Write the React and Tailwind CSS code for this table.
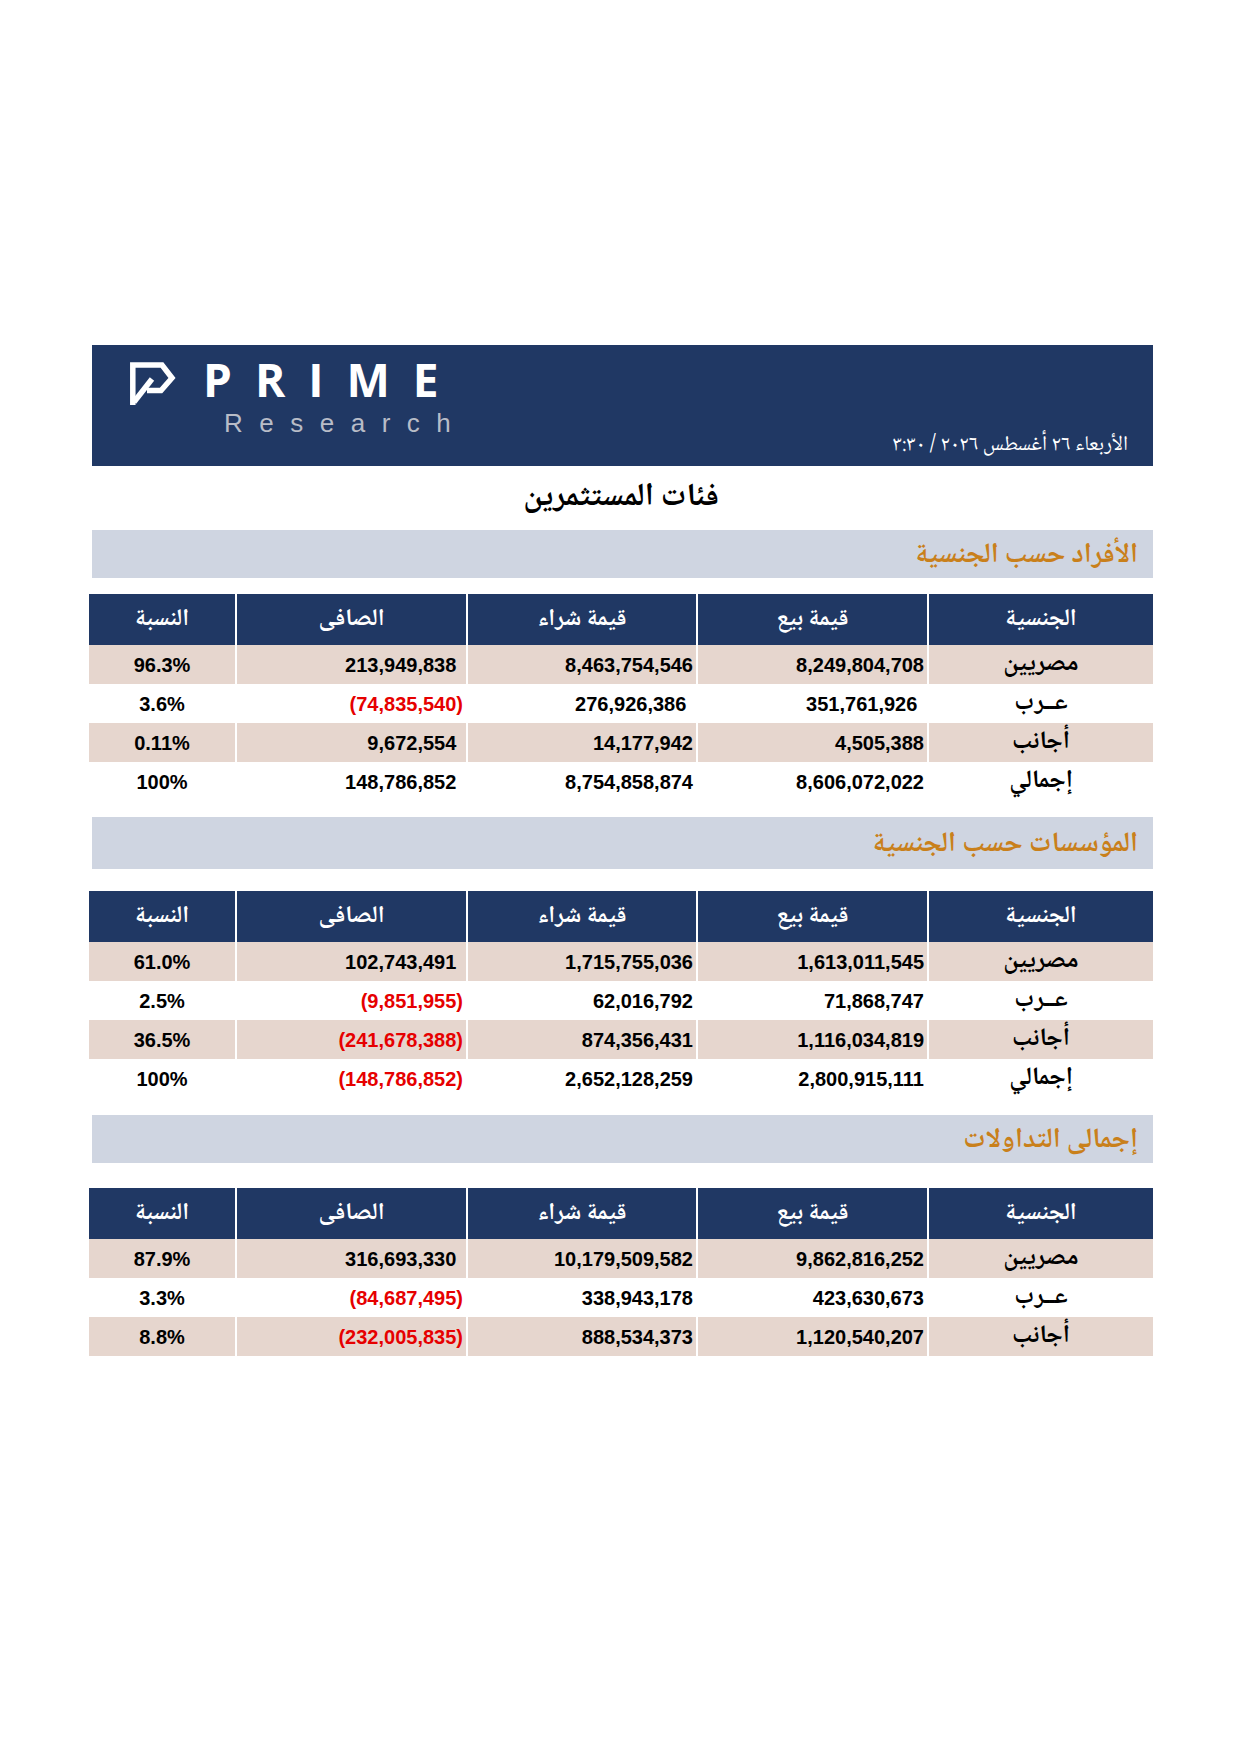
import React from "react";

const NAVY = "bg-[#203864]";

const t1 = [
  { name: "مصريين", sell: "8,249,804,708", buy: "8,463,754,546", net: "213,949,838", pct: "96.3%" },
  { name: "عــرب", sell: "351,761,926", buy: "276,926,386", net: "(74,835,540)", pct: "3.6%", pad: true },
  { name: "أجانب", sell: "4,505,388", buy: "14,177,942", net: "9,672,554", pct: "0.11%" },
  { name: "إجمالي", sell: "8,606,072,022", buy: "8,754,858,874", net: "148,786,852", pct: "100%" },
];
const t2 = [
  { name: "مصريين", sell: "1,613,011,545", buy: "1,715,755,036", net: "102,743,491", pct: "61.0%" },
  { name: "عــرب", sell: "71,868,747", buy: "62,016,792", net: "(9,851,955)", pct: "2.5%" },
  { name: "أجانب", sell: "1,116,034,819", buy: "874,356,431", net: "(241,678,388)", pct: "36.5%" },
  { name: "إجمالي", sell: "2,800,915,111", buy: "2,652,128,259", net: "(148,786,852)", pct: "100%" },
];
const t3 = [
  { name: "مصريين", sell: "9,862,816,252", buy: "10,179,509,582", net: "316,693,330", pct: "87.9%" },
  { name: "عــرب", sell: "423,630,673", buy: "338,943,178", net: "(84,687,495)", pct: "3.3%" },
  { name: "أجانب", sell: "1,120,540,207", buy: "888,534,373", net: "(232,005,835)", pct: "8.8%" },
];

const GRID = "grid grid-cols-[146px_229px_228px_229px_224px] gap-x-[2px]";
const AR = "font-['Noto_Naskh_Arabic','Noto_Sans_Arabic','DejaVu_Sans',sans-serif]";

function Num({ v, pad, bg }) {
  const neg = v.startsWith("(");
  return (
    <div className={`${bg} flex items-center justify-end pr-[3px]`}>
      <span className={neg ? "text-[#e60000]" : "text-black"}>{v}</span>
      {pad && !neg ? <span className="invisible">)</span> : null}
    </div>
  );
}

function Table({ rows }) {
  return (
    <div className="flex flex-col">
      <div className={`${GRID} h-[51px]`}>
        {["النسبة", "الصافى", "قيمة شراء", "قيمة بيع", "الجنسية"].map((h) => (
          <div key={h} dir="rtl" className={`${NAVY} ${AR} flex items-center justify-center text-white font-bold text-[24px] leading-none`}>
            <span>{h}</span>
          </div>
        ))}
      </div>
      {rows.map((r, i) => {
        const bg = i % 2 === 0 ? "bg-[#e6d6ce]" : "bg-white";
        return (
          <div key={i} className={`${GRID} h-[39px] text-[20px] font-bold`}>
            <div className={`${bg} flex items-center justify-center`}>{r.pct}</div>
            <Num v={r.net} pad={true} bg={bg} />
            <Num v={r.buy} pad={r.pad} bg={bg} />
            <Num v={r.sell} pad={r.pad} bg={bg} />
            <div dir="rtl" className={`${bg} ${AR} flex items-center justify-center text-[25px] leading-none`}>
              <span>{r.name}</span>
            </div>
          </div>
        );
      })}
    </div>
  );
}

function Bar({ title, h = "h-[48px]" }) {
  return (
    <div dir="rtl" className={`ml-[3px] ${h} bg-[#cfd5e1] ${AR} flex items-center pr-[15px] text-[#c9801b] font-bold text-[28px] leading-none`}>
      <span className="mt-[4px]">{title}</span>
    </div>
  );
}

function Logo() {
  return (
    <svg width="46" height="44" viewBox="0 0 46 44" className="block">
      <polyline points="2.8,43 2.8,3 32,3 42,16 31,28.5 17,28.5" fill="none" stroke="white" strokeWidth="5.5" strokeLinejoin="miter" />
      <line x1="4" y1="40" x2="22" y2="17" stroke="white" strokeWidth="5.5" />
    </svg>
  );
}

export default function App() {
  return (
    <div className="w-[1240px] h-[1754px] bg-white font-['Liberation_Sans','DejaVu_Sans',sans-serif] text-black">
      <div className="ml-[89px] w-[1064px] pt-[345px] flex flex-col">
        <div className={`ml-[3px] h-[121px] ${NAVY} flex justify-between`}>
          <div className="flex pl-[38px] pt-[17px]">
            <Logo />
            <div className="flex flex-col ml-[27px]">
              <div className="font-['Open_Sans',sans-serif] font-bold text-white text-[46px] leading-[46px] tracking-[23px] -mt-[6px]">PRIME</div>
              <div className="ml-[21px] mt-[8px] text-[#b8bcc7] text-[26px] leading-[26px] tracking-[16.5px]">Research</div>
            </div>
          </div>
          <div dir="rtl" className={`${AR} flex items-end pb-[10px] pr-[25px] text-white text-[21px] leading-none`}>
            الأربعاء ٢٦ أغسطس ٢٠٢٦ / ٣:٣٠
          </div>
        </div>
        <div dir="rtl" className={`${AR} h-[64px] flex items-center justify-center font-bold text-[32px] leading-none`}>
          <span>فئات المستثمرين</span>
        </div>
        <Bar title="الأفراد حسب الجنسية" />
        <div className="mt-[16px]"><Table rows={t1} /></div>
        <div className="mt-[16px]"><Bar title="المؤسسات حسب الجنسية" h="h-[52px]" /></div>
        <div className="mt-[22px]"><Table rows={t2} /></div>
        <div className="mt-[17px]"><Bar title="إجمالى التداولات" /></div>
        <div className="mt-[25px]"><Table rows={t3} /></div>
      </div>
    </div>
  );
}
